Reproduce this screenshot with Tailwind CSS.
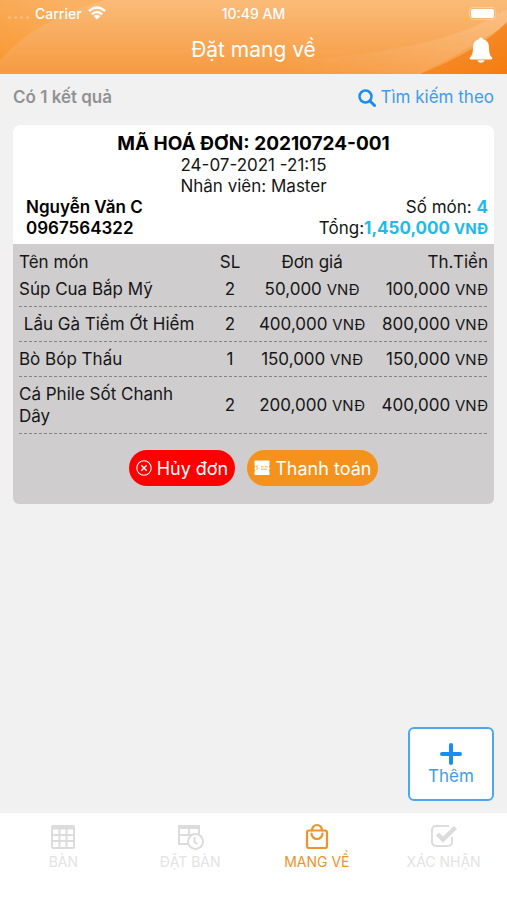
<!DOCTYPE html>
<html lang="vi">
<head>
<meta charset="utf-8">
<meta name="viewport" content="width=device-width, initial-scale=1">
<title>Đặt mang về</title>
<script src="https://cdn.jsdelivr.net/npm/@tailwindcss/browser@4"></script>
</head>
<body class="flex min-h-screen flex-col bg-[#f1f1f1] font-[Inter,'Liberation_Sans',sans-serif] text-[#161616]">
<header class="relative overflow-hidden bg-[#f79a3a] text-white">
  <svg class="absolute inset-0 h-full w-full" viewBox="0 0 507 74" preserveAspectRatio="none" aria-hidden="true">
    <defs>
      <linearGradient id="base" x1="0" y1="0" x2="0" y2="1"><stop offset="0" stop-color="#fabb78"/><stop offset="1" stop-color="#f79a40"/></linearGradient>
      <linearGradient id="left" x1="0.6" y1="0" x2="0" y2="1"><stop offset="0" stop-color="#fbb164"/><stop offset="1" stop-color="#f89a34"/></linearGradient>
      <linearGradient id="right" x1="0" y1="0" x2="1" y2="1"><stop offset="0" stop-color="#f7933a"/><stop offset="1" stop-color="#f47d10"/></linearGradient>
      <linearGradient id="band" x1="0" y1="0" x2="1" y2="0"><stop offset="0" stop-color="#fff" stop-opacity="0"/><stop offset="1" stop-color="#fff" stop-opacity=".14"/></linearGradient>
    </defs>
    <path fill="url(#base)" d="M0 0H507V74H0z"/>
    <path fill="url(#left)" d="M0 0H105Q35 20 0 60z"/>
    <path fill="url(#band)" d="M280 60Q440 54 507 9V24Q460 54 420 74H280z"/>
    <path fill="url(#right)" d="M420 74Q480 50 507 22V74z"/>
  </svg>
  <div class="relative grid h-[26px] grid-cols-3 items-center px-2 text-[14px] font-medium">
    <div class="flex items-center gap-[6px]">
      <span class="flex gap-[3px] pt-2" aria-hidden="true"><i class="size-[3px] rounded-full bg-white/25"></i><i class="size-[3px] rounded-full bg-white/25"></i><i class="size-[3px] rounded-full bg-white/25"></i><i class="size-[3px] rounded-full bg-white/25"></i></span>
      <span>Carrier</span>
      <svg class="h-[14px] w-[18px]" viewBox="0 0 18 14" fill="none" stroke="#fff" stroke-width="2.4" aria-hidden="true"><path d="M1 5.2Q9-2.2 17 5.2M3.8 8.3Q9 3.5 14.2 8.3"/><path fill="#fff" stroke="none" d="M5.7 10.2Q9 7.4 12.3 10.2L9 13.6z"/></svg>
    </div>
    <div class="text-center">10:49 AM</div>
    <svg class="h-[13px] w-[30px] justify-self-end" viewBox="0 0 30 13" aria-hidden="true"><rect x=".5" y=".5" width="26" height="12" rx="3" fill="none" stroke="#fff" stroke-opacity=".3"/><rect x="2" y="2" width="23" height="9" rx="2" fill="#fff"/><path d="M28 4.5Q29.5 6.5 28 8.5z" fill="#fff" fill-opacity=".4"/></svg>
  </div>
  <div class="relative grid h-12 grid-cols-[1fr_auto_1fr] items-center px-[14px]">
    <h1 class="col-start-2 text-[21px]">Đặt mang về</h1>
    <button class="justify-self-end" aria-label="Thông báo"><svg class="h-[26px] w-6" viewBox="0 0 24 26" fill="#fff" aria-hidden="true"><path d="M12 0.5c1.2 0 2 .8 2 1.8 4 .9 6 4 6 8.2 0 6 1.200 8.300 3 9.800.8.8.3 2.100-.9 2.100H1.900c-1.200 0-1.700-1.300-.9-2.100 1.800-1.500 3-3.800 3-9.800 0-4.200 2-7.300 6-8.200 0-1 .8-1.800 2-1.800zM8.500 23.300h7c-.2 1.500-1.500 2.400-3.500 2.400s-3.300-.9-3.500-2.400z"/></svg></button>
  </div>
</header>

<main class="flex grow flex-col px-[13px] pb-3">
  <div class="flex h-[51px] items-center justify-between pb-[3px]">
    <p class="text-[17px] font-semibold text-[#929292]">Có 1 kết quả</p>
    <button class="flex items-center gap-1 text-[17px] text-[#3f9cec]">
      <svg class="size-[18px]" viewBox="0 0 18 18" fill="none" stroke="#1b8df0" aria-hidden="true"><circle cx="7.500" cy="7.500" r="6" stroke-width="2.500"/><path d="M12 12l4.500 4.500" stroke-width="3" stroke-linecap="round"/></svg>
      Tìm kiếm theo
    </button>
  </div>

  <article class="overflow-hidden rounded-md bg-[#d0cdcf]">
    <div class="bg-white pt-2 pb-[5px] text-[17px] leading-[21px]">
      <h2 class="text-center text-[19px] leading-[22px] font-bold text-black">MÃ HOÁ ĐƠN: 20210724-001</h2>
      <p class="text-center">24-07-2021 -21:15</p>
      <p class="text-center">Nhân viên: Master</p>
      <div class="flex justify-between pr-[6px] pl-[13px]">
        <div class="font-semibold text-black"><p>Nguyễn Văn C</p><p>0967564322</p></div>
        <div class="text-right">
          <p>Số món: <b class="font-bold text-[#1fbbe8]">4</b></p>
          <p>Tổng:<b class="font-bold text-[#1fbbe8]">1,450,000 <span class="text-[15px]">VNĐ</span></b></p>
        </div>
      </div>
    </div>

    <div class="px-[6px] pt-[7px]">
      <table class="w-full table-fixed border-collapse text-[17px] leading-[22px] [&_span]:leading-none">
        <thead>
          <tr>
            <th class="w-[39%] p-0 text-left font-normal">Tên món</th>
            <th class="w-[12%] p-0 font-normal">SL</th>
            <th class="w-[23%] p-0 font-normal">Đơn giá</th>
            <th class="w-[26%] p-0 text-right font-normal">Th.Tiền</th>
          </tr>
        </thead>
        <tbody class="[&_td]:pt-[5px] [&_td]:pb-[7px]">
          <tr class="h-[34px] bg-[repeating-linear-gradient(90deg,#858385_0_3px,transparent_3px_5px)] bg-[length:100%_1px] bg-bottom bg-no-repeat"><td>Súp Cua Bắp Mỹ</td><td class="text-center">2</td><td class="text-center">50,000 <span class="text-[15px]">VNĐ</span></td><td class="text-right">100,000 <span class="text-[15px]">VNĐ</span></td></tr>
          <tr class="h-[35px] bg-[repeating-linear-gradient(90deg,#858385_0_3px,transparent_3px_5px)] bg-[length:100%_1px] bg-bottom bg-no-repeat"><td class="whitespace-pre"> Lẩu Gà Tiềm Ớt Hiểm</td><td class="text-center">2</td><td class="text-center">400,000 <span class="text-[15px]">VNĐ</span></td><td class="text-right">800,000 <span class="text-[15px]">VNĐ</span></td></tr>
          <tr class="h-[35px] bg-[repeating-linear-gradient(90deg,#858385_0_3px,transparent_3px_5px)] bg-[length:100%_1px] bg-bottom bg-no-repeat"><td>Bò Bóp Thấu</td><td class="text-center">1</td><td class="text-center">150,000 <span class="text-[15px]">VNĐ</span></td><td class="text-right">150,000 <span class="text-[15px]">VNĐ</span></td></tr>
          <tr class="h-[57px] bg-[repeating-linear-gradient(90deg,#858385_0_3px,transparent_3px_5px)] bg-[length:100%_1px] bg-bottom bg-no-repeat"><td>Cá Phile Sốt Chanh Dây</td><td class="text-center">2</td><td class="text-center">200,000 <span class="text-[15px]">VNĐ</span></td><td class="text-right">400,000 <span class="text-[15px]">VNĐ</span></td></tr>
        </tbody>
      </table>
    </div>

    <div class="flex justify-center gap-3 pt-4 pb-[18px] text-[18px] text-white">
      <button class="flex h-9 items-center gap-[5px] rounded-full bg-[#fe0000] px-[7px]">
        <svg class="size-4" viewBox="0 0 16 16" fill="none" stroke="#fff" stroke-width="1.100" aria-hidden="true"><circle cx="8" cy="8" r="7.200"/><path d="M5.300 5.300l5.400 5.400M10.700 5.300l-5.400 5.400" stroke-width="1.400"/></svg>
        Hủy đơn
      </button>
      <button class="flex h-9 items-center gap-[5px] rounded-full bg-[#f5921e] px-[7px]">
        <svg class="size-4" viewBox="0 0 16 16" aria-hidden="true"><path fill="#fff" d="M.5.5h15v5l-.7 1 .7 1v2l-.7 1 .7 1v3.500H.5V11.500l.7-1-.7-1v-2l.7-1-.7-1z"/><path d="M4 6.200c-1.800-.8-2.300.9-.9 1.400s.9 2.200-.9 1.400M7 6.800h2.500M11 6.800h2.500M7 9.200h6" fill="none" stroke="#f5921e" stroke-width=".8"/></svg>
        Thanh toán
      </button>
    </div>
  </article>

  <button class="mt-auto flex h-[74px] w-[86px] flex-col items-center justify-center self-end rounded-md border-2 border-[#4ea6ef] bg-white pt-[2px] text-[17px] leading-[22px] text-[#3f9cec]">
    <svg class="size-[22px]" viewBox="0 0 22 22" stroke="#1b8df0" stroke-width="4" stroke-linecap="round" aria-hidden="true"><path d="M11 2v18M2 11h18"/></svg>
    Thêm
  </button>
</main>

<nav class="grid h-[87px] grid-cols-4 bg-white pt-[10px] text-[14px] leading-4 text-[#e3e3e3]">
  <a href="#" class="flex flex-col items-center gap-[3px]">
    <svg class="size-7" viewBox="0 0 28 28" fill="none" stroke="#dcdcdc" stroke-width="2" aria-hidden="true"><rect x="3" y="3" width="22" height="22" rx="1"/><path d="M3 5h22" stroke-width="3"/><path d="M3 12h22M3 18h22M10.500 5v20M17.500 5v20"/></svg>
    BÀN
  </a>
  <a href="#" class="flex flex-col items-center gap-[3px]">
    <svg class="size-7" viewBox="0 0 28 28" fill="none" stroke="#dcdcdc" stroke-width="2" aria-hidden="true"><path d="M23 11V3H3v18h9M3 12h13M13 5v8"/><path d="M3 4.500h20" stroke-width="3"/><circle cx="19.500" cy="18.500" r="7.500" fill="#fff"/><path d="M18.500 14v5l3 2"/></svg>
    ĐẶT BÀN
  </a>
  <a href="#" class="flex flex-col items-center gap-[3px] text-[#f0932b]" aria-current="page">
    <svg class="size-7" viewBox="0 0 28 28" fill="none" stroke="#f0932b" stroke-width="2.200" aria-hidden="true"><rect x="4" y="7.500" width="20" height="17.500" rx="2"/><path d="M9 7.500a5 5.500 0 0 1 10 0M8.500 10.500a5.500 5.500 0 0 0 11 0" stroke-linecap="round"/></svg>
    MANG VỀ
  </a>
  <a href="#" class="flex flex-col items-center gap-[3px]">
    <svg class="size-7" viewBox="0 0 28 28" fill="none" stroke="#dcdcdc" stroke-width="2" aria-hidden="true"><path d="M19 3H6a4 4 0 0 0-4 4v12a4 4 0 0 0 4 4h12a4 4 0 0 0 4-4v-5"/><path d="M7.500 11l5.500 5.500L25.500 4.500" stroke-width="4.500"/></svg>
    XÁC NHẬN
  </a>
</nav>
</body>
</html>
